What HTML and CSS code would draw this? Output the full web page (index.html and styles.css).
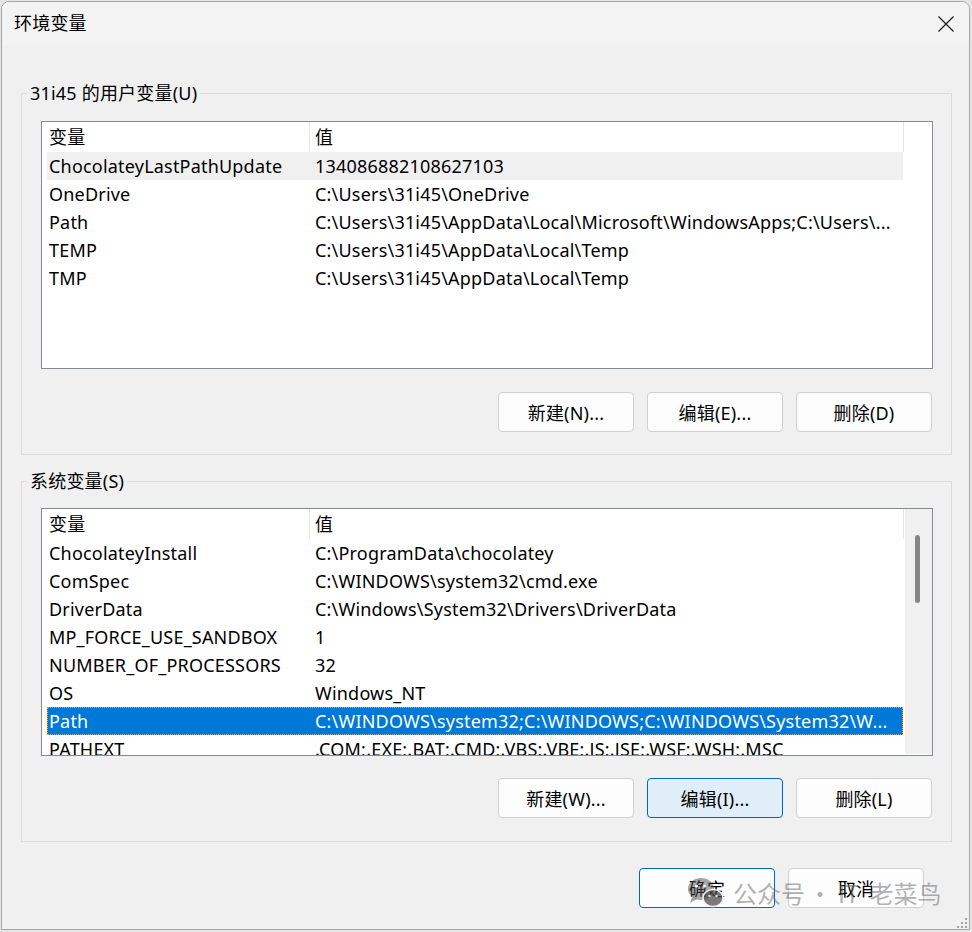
FILE: index.html
```html
<!DOCTYPE html>
<html>
<head>
    <meta charset="utf-8">
    <link rel="stylesheet" href="styles.css">
</head>
<body>

<div class="window">
    <div class="titlebar">
        <span class="title">环境变量</span>
        <button class="close-btn" aria-label="关闭">
            <svg width="16" height="16" viewBox="0 0 16 16">
                <path d="M0.5 0.5 L15.5 15.5 M15.5 0.5 L0.5 15.5" stroke="#1b1b1b" stroke-width="1.2" fill="none"/>
            </svg>
        </button>
    </div>

    <div class="dialog-body">
        <fieldset class="group group-user">
            <legend>31i45 的用户变量(U)</legend>
            <div class="list">
                <div class="list-main">
                    <div class="list-head">
                        <div class="head-cell head-name">变量</div>
                        <div class="head-cell head-value">值</div>
                    </div>
                    <div class="row row-inactive"><span>ChocolateyLastPathUpdate</span><span>134086882108627103</span></div>
                    <div class="row"><span>OneDrive</span><span>C:\Users\31i45\OneDrive</span></div>
                    <div class="row"><span>Path</span><span>C:\Users\31i45\AppData\Local\Microsoft\WindowsApps;C:\Users\...</span></div>
                    <div class="row"><span>TEMP</span><span>C:\Users\31i45\AppData\Local\Temp</span></div>
                    <div class="row"><span>TMP</span><span>C:\Users\31i45\AppData\Local\Temp</span></div>
                </div>
                <div class="list-side"></div>
            </div>
            <div class="btn-row">
                <button class="btn">新建(N)...</button>
                <button class="btn">编辑(E)...</button>
                <button class="btn">删除(D)</button>
            </div>
        </fieldset>

        <fieldset class="group group-system">
            <legend>系统变量(S)</legend>
            <div class="list">
                <div class="list-main">
                    <div class="list-head">
                        <div class="head-cell head-name">变量</div>
                        <div class="head-cell head-value">值</div>
                    </div>
                    <div class="row"><span>ChocolateyInstall</span><span>C:\ProgramData\chocolatey</span></div>
                    <div class="row"><span>ComSpec</span><span>C:\WINDOWS\system32\cmd.exe</span></div>
                    <div class="row"><span>DriverData</span><span>C:\Windows\System32\Drivers\DriverData</span></div>
                    <div class="row"><span>MP_FORCE_USE_SANDBOX</span><span>1</span></div>
                    <div class="row"><span>NUMBER_OF_PROCESSORS</span><span>32</span></div>
                    <div class="row"><span>OS</span><span>Windows_NT</span></div>
                    <div class="row row-selected"><span>Path</span><span>C:\WINDOWS\system32;C:\WINDOWS;C:\WINDOWS\System32\W...</span></div>
                    <div class="row"><span>PATHEXT</span><span>.COM;.EXE;.BAT;.CMD;.VBS;.VBE;.JS;.JSE;.WSF;.WSH;.MSC</span></div>
                </div>
                <div class="list-side">
                    <div class="scrollbar"><div class="thumb"></div></div>
                </div>
            </div>
            <div class="btn-row">
                <button class="btn">新建(W)...</button>
                <button class="btn btn-focus">编辑(I)...</button>
                <button class="btn">删除(L)</button>
            </div>
        </fieldset>

        <div class="dialog-actions">
            <button class="btn btn-default">确定</button>
            <button class="btn">取消</button>
        </div>
    </div>

    <!-- watermark over the bottom buttons -->
    <div class="watermark">
        <svg class="wm-icon" width="40" height="32" viewBox="0 0 40 32">
            <ellipse cx="15" cy="13" rx="13" ry="11" fill="rgba(80,80,80,0.5)"/>
            <path d="M6 21 L4 27 L11 23 Z" fill="rgba(80,80,80,0.5)"/>
            <ellipse cx="27" cy="22" rx="10" ry="8.5" fill="rgba(70,70,70,0.72)" stroke="#f0f0f0" stroke-width="1.5"/>
            <circle cx="10.5" cy="10" r="1.6" fill="#f6f6f6"/>
            <circle cx="18.5" cy="10" r="1.6" fill="#f6f6f6"/>
            <circle cx="23.5" cy="20" r="1.3" fill="#d8d8d8"/>
            <circle cx="30.5" cy="20" r="1.3" fill="#d8d8d8"/>
        </svg>
        <span>公众号</span><span class="wm-dot">·</span><span class="wm-it">IT</span><span class="wm-name">老菜鸟</span>
    </div>

    <svg class="grip" width="12" height="12" viewBox="0 0 12 12">
        <rect x="9" y="1" width="2" height="2"/>
        <rect x="5" y="5" width="2" height="2"/>
        <rect x="9" y="5" width="2" height="2"/>
        <rect x="1" y="9" width="2" height="2"/>
        <rect x="5" y="9" width="2" height="2"/>
        <rect x="9" y="9" width="2" height="2"/>
    </svg>
</div>

</body>
</html>
```

FILE: styles.css
```css
body, html {
    margin: 0;
    height: 100%;
}
body {
    background-color: #e4e4e4;
    font-family: "Noto Sans", "Noto Sans CJK SC", sans-serif;
    font-size: 18px;
    letter-spacing: 0.2px;
    color: #000;
}

.window {
    position: relative;
    box-sizing: border-box;
    width: 969px;
    height: 929px;
    margin: 1px 0 0 1px;
    background-color: #f0f0f0;
    border: 1px solid #a6a6a6;
    border-radius: 8px 8px 0 0;
    overflow: hidden;
    display: flex;
    flex-direction: column;
}

.titlebar {
    height: 43px;
    flex-shrink: 0;
    background-color: #f3f3f3;
    display: flex;
    align-items: center;
}

.title {
    flex: 1;
    padding-left: 12px;
    line-height: 43px;
}

.close-btn {
    width: 46px;
    height: 43px;
    padding: 0;
    border: none;
    background: none;
    display: flex;
    align-items: center;
    justify-content: center;
}

.dialog-body {
    display: flex;
    flex-direction: column;
    padding: 0 17px 0 19px;
}

.group {
    margin: 0;
    min-width: 0;
    border: 1px solid #dcdcdc;
    padding: 16px 18px 22px 19px;
}

.group-user {
    margin-top: 36px;
}

.group-system {
    margin-top: 14px;
    padding-top: 15px;
    padding-bottom: 23px;
}

.group legend {
    margin-left: -14px;
    padding: 0 3px;
    line-height: 24px;
}

.list {
    box-sizing: border-box;
    height: 248px;
    border: 1px solid #868a94;
    background-color: #fff;
    display: flex;
}

.list-main {
    width: 862px;
    overflow: hidden;
}

.list-side {
    flex: 1;
    display: flex;
}

.list-head {
    display: grid;
    grid-template-columns: 268px 594px;
    height: 30px;
}

.head-cell {
    box-sizing: border-box;
    line-height: 30px;
    border-right: 1px solid #e5e5e5;
}

.head-name {
    padding-left: 7px;
}

.head-value {
    padding-left: 5px;
}

.row {
    display: grid;
    grid-template-columns: 266px 1fr;
    width: 856px;
    height: 28px;
    margin-left: 5px;
    padding-left: 2px;
    box-sizing: border-box;
    line-height: 28px;
    white-space: nowrap;
}

.row span {
    overflow: hidden;
}

.row-inactive {
    background-color: #f0f0f0;
}

.row-selected {
    background-color: #0078d7;
    color: #fff;
    outline: 1px dotted #e0a35a;
    outline-offset: -1px;
}

.scrollbar {
    flex: 1;
    margin: 0 0 1px 1px;
    background-color: #f0f0f0;
}

.thumb {
    width: 5px;
    height: 68px;
    margin: 26px 0 0 10px;
    border-radius: 3px;
    background-color: #868686;
}

.btn-row {
    display: flex;
    justify-content: flex-end;
    gap: 13px;
    margin-top: 23px;
    margin-right: 1px;
}

.group-system .btn-row {
    margin-top: 22px;
}

.btn {
    box-sizing: border-box;
    width: 136px;
    height: 40px;
    padding: 0;
    border: 1px solid #d0d0d0;
    border-radius: 4px;
    background-color: #fdfdfd;
    font-family: inherit;
    font-size: 18px;
    letter-spacing: 0.2px;
    color: #000;
}

.btn-focus {
    background-color: #e0eef9;
    border-color: #0067c0;
}

.btn-default {
    border-color: #0067c0;
}

.dialog-actions {
    display: flex;
    justify-content: flex-end;
    gap: 13px;
    margin-top: 26px;
    margin-right: 28px;
}

.watermark {
    position: absolute;
    left: 684px;
    top: 875px;
    display: flex;
    align-items: center;
    height: 30px;
    font-family: "Noto Sans CJK SC", sans-serif;
    font-size: 24px;
    letter-spacing: 0;
    color: rgba(100, 100, 100, 0.5);
    white-space: nowrap;
}

.wm-icon {
    margin-right: 7px;
}

.wm-dot {
    width: 30px;
    text-align: center;
}

.wm-it {
    margin-left: 3px;
}

.wm-name {
    margin-left: 10px;
}

.grip {
    position: absolute;
    right: 1px;
    bottom: 0;
    fill: #a3a3a3;
}
```
